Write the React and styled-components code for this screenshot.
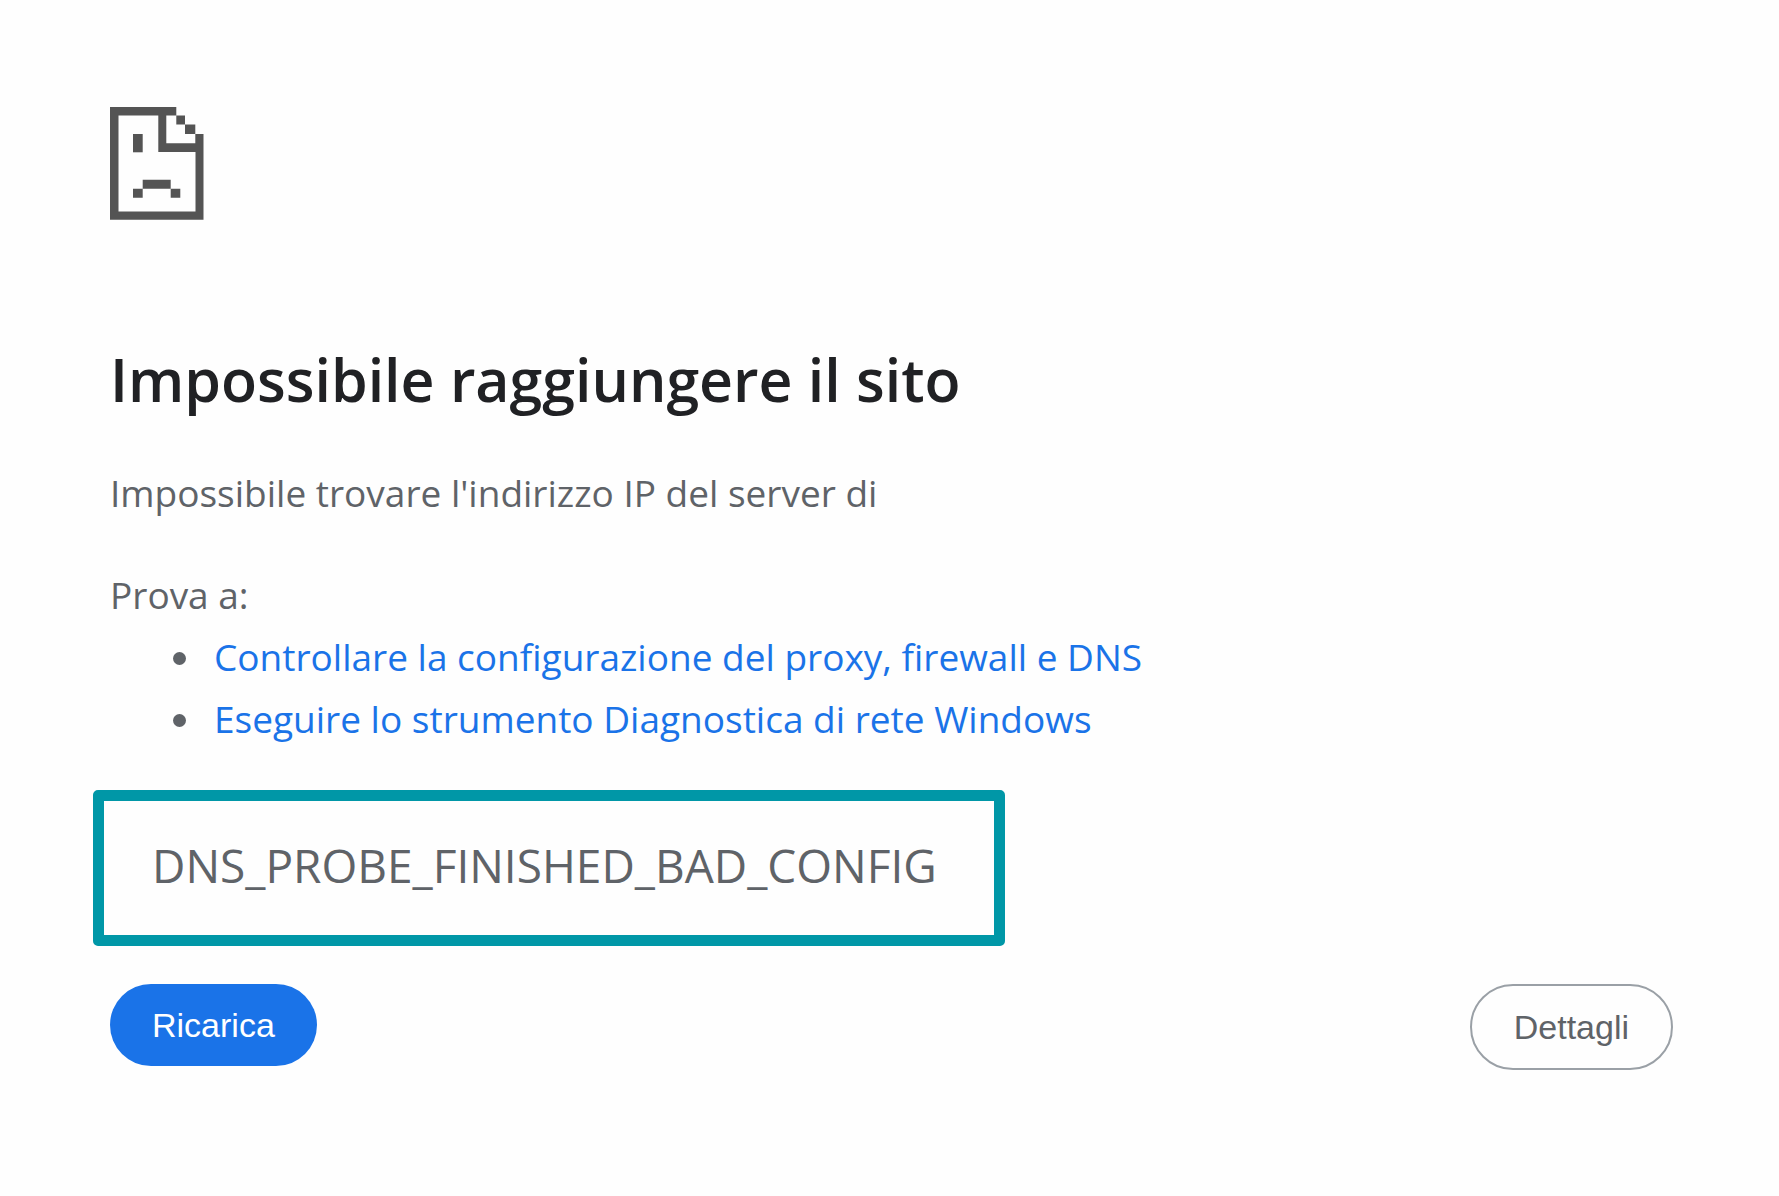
import React from "react";
import styled, { createGlobalStyle } from "styled-components";

const GlobalStyle = createGlobalStyle`
  * {
    box-sizing: border-box;
  }
  body {
    margin: 0;
    background-color: #fefefe;
    color: #5f6368;
    font-family: "Open Sans", "Noto Sans", sans-serif;
    font-size: 37px;
    line-height: 62px;
  }
`;

const Page = styled.main`
  padding: 107px 106px 126px 110px;
`;

const SadFile = styled.svg`
  display: block;
  width: 94px;
  height: 113px;
  fill: #545454;
`;

const Title = styled.h1`
  margin: 121px 0 0;
  color: #202124;
  font-size: 59px;
  font-weight: 600;
  line-height: 76px;
`;

const Summary = styled.p`
  margin: 45px 0 40px;
`;

const Suggestions = styled.section`
  p {
    margin: 0;
  }
  ul {
    margin: 0;
    padding-left: 96px;
  }
  li {
    padding-left: 8px;
  }
`;

const Link = styled.a`
  color: #1a73e8;
  text-decoration: none;
`;

const ErrorCode = styled.div`
  max-width: 912px;
  margin: 40px 0 38px -17px;
  padding: 32px 48px 38px;
  border: 11px solid #0097a7;
  border-radius: 5px;
  font-size: 46px;
  line-height: 64px;
`;

const Buttons = styled.div`
  display: flex;
  align-items: flex-start;
  justify-content: space-between;
`;

const Button = styled.button`
  padding: 21px 42px;
  border: ${(props) => (props.$primary ? "none" : "2px solid #9aa0a6")};
  border-radius: 43px;
  background-color: ${(props) => (props.$primary ? "#1a73e8" : "transparent")};
  color: ${(props) => (props.$primary ? "#fff" : "#5f6368")};
  font-family: "Liberation Sans", Arial, sans-serif;
  font-size: 34px;
  line-height: 40px;
  cursor: pointer;
`;

export default function App() {
  return (
    <>
      <GlobalStyle />
      <Page>
        <SadFile viewBox="0 0 94 113" aria-hidden="true">
          {/* page outline with the folded corner */}
          <path
            fillRule="evenodd"
            d="M0 0H66.3V8.5H75V17.6H85.3V27H93.5V112.7H0ZM8.5 8.5V104.5H85.5V45H48.3V8.5ZM56.3 8.5V36.2H85.3V27H75V17.6H66.3V8.5Z"
          />
          {/* eye and mouth */}
          <path d="M23 27H32.7V45.3H23Z" />
          <path d="M32.7 72.7H60.7V81.7H70.3V90.7H60.7V81.7H32.7V90.7H23V81.7H32.7Z" />
        </SadFile>
        <Title>Impossibile raggiungere il sito</Title>
        <Summary>Impossibile trovare l'indirizzo IP del server di</Summary>
        <Suggestions>
          <p>Prova a:</p>
          <ul>
            <li>
              <Link href="#proxy">
                Controllare la configurazione del proxy, firewall e DNS
              </Link>
            </li>
            <li>
              <Link href="#diagnostica">
                Eseguire lo strumento Diagnostica di rete Windows
              </Link>
            </li>
          </ul>
        </Suggestions>
        <ErrorCode>DNS_PROBE_FINISHED_BAD_CONFIG</ErrorCode>
        <Buttons>
          <Button type="button" $primary>
            Ricarica
          </Button>
          <Button type="button">Dettagli</Button>
        </Buttons>
      </Page>
    </>
  );
}
